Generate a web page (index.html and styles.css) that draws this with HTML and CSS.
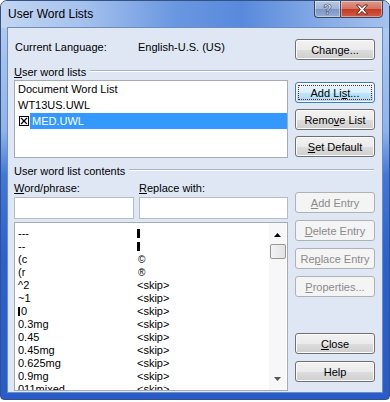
FILE: index.html
```html
<!DOCTYPE html>
<html lang="en">
<head>
  <meta charset="UTF-8">
  <title>User Word Lists</title>
  <link rel="stylesheet" href="styles.css">
</head>
<body>
  <div class="window">
    <div class="titlebar">
      <span class="title">User Word Lists</span>
      <div class="caption">
        <span class="cap-btn cap-help">?</span>
        <span class="cap-btn cap-close">
          <svg width="14" height="11" viewBox="0 0 14 11"><path d="M1.5 1h3l2.5 2.7L9.5 1h3L8.7 5.5l3.8 4.5h-3L7 7.3 4.5 10h-3l3.8-4.5z" fill="#fff" stroke="#5a2a22" stroke-width="1"/></svg>
        </span>
      </div>
    </div>

    <div class="client">
      <div class="row lang-row">
        <div class="left lang">
          <span class="lang-label">Current Language:</span>
          <span>English-U.S. (US)</span>
        </div>
        <div class="right">
          <button class="btn">Chan<u>g</u>e...</button>
        </div>
      </div>

      <div class="group-label"><span><u>U</u>ser word lists</span><i class="etch"></i></div>

      <div class="row lists-row">
        <div class="left listbox">
          <div class="item">Document Word List</div>
          <div class="item">WT13US.UWL</div>
          <div class="item item-sel">
            <svg class="check" width="10" height="10" viewBox="0 0 10 10"><rect x="0.5" y="0.5" width="9" height="9" fill="#fff" stroke="#000"/><path d="M2 2l6 6M8 2l-6 6" stroke="#000" stroke-width="1.2"/></svg>
            <span class="sel-text">MED.UWL</span>
          </div>
        </div>
        <div class="right btn-col top-btns">
          <button class="btn focus">Add Li<u>s</u>t...</button>
          <button class="btn">Remo<u>v</u>e List</button>
          <button class="btn"><u>S</u>et Default</button>
        </div>
      </div>

      <div class="group-label second"><span>User word list contents</span><i class="etch"></i></div>

      <div class="row entries-row">
        <div class="left">
          <div class="fields">
            <div class="field field-word">
              <span class="field-label"><u>W</u>ord/phrase:</span>
              <span class="edit"></span>
            </div>
            <div class="field field-repl">
              <span class="field-label"><u>R</u>eplace with:</span>
              <span class="edit"></span>
            </div>
          </div>
          <div class="biglist">
            <div class="rows">
              <div class="r"><span class="c1">---</span><span class="c2"><i class="bar"></i></span></div>
              <div class="r"><span class="c1">--</span><span class="c2"><i class="bar"></i></span></div>
              <div class="r"><span class="c1">(c</span><span class="c2 sym">©</span></div>
              <div class="r"><span class="c1">(r</span><span class="c2 sym">®</span></div>
              <div class="r"><span class="c1">^2</span><span class="c2">&lt;skip&gt;</span></div>
              <div class="r"><span class="c1">~1</span><span class="c2">&lt;skip&gt;</span></div>
              <div class="r"><span class="c1"><i class="bar thin"></i>0</span><span class="c2">&lt;skip&gt;</span></div>
              <div class="r"><span class="c1">0.3mg</span><span class="c2">&lt;skip&gt;</span></div>
              <div class="r"><span class="c1">0.45</span><span class="c2">&lt;skip&gt;</span></div>
              <div class="r"><span class="c1">0.45mg</span><span class="c2">&lt;skip&gt;</span></div>
              <div class="r"><span class="c1">0.625mg</span><span class="c2">&lt;skip&gt;</span></div>
              <div class="r"><span class="c1">0.9mg</span><span class="c2">&lt;skip&gt;</span></div>
              <div class="r"><span class="c1">011mixed</span><span class="c2">&lt;skip&gt;</span></div>
            </div>
            <div class="scrollbar">
              <span class="arrow">
                <svg width="7" height="4" viewBox="0 0 7 4"><path d="M0 4h7L3.5 0z" fill="#000"/></svg>
              </span>
              <span class="thumb"></span>
              <span class="arrow arrow-down">
                <svg width="7" height="4" viewBox="0 0 7 4"><path d="M0 0h7L3.5 4z" fill="#555"/></svg>
              </span>
            </div>
          </div>
        </div>
        <div class="right btn-col entry-btns">
          <button class="btn off"><u>A</u>dd Entry</button>
          <button class="btn off"><u>D</u>elete Entry</button>
          <button class="btn off">Re<u>p</u>lace Entry</button>
          <button class="btn off"><u>P</u>roperties...</button>
          <button class="btn close-btn"><u>C</u>lose</button>
          <button class="btn">Help</button>
        </div>
      </div>
    </div>
  </div>
</body>
</html>
```

FILE: styles.css
```css
* {
  box-sizing: border-box;
}
body {
  margin: 0;
  background: #fff;
  font-family: 'Liberation Sans', Arial, sans-serif;
  font-size: 11px;
  line-height: 13px;
  color: #000;
}

/* window frame */
.window {
  width: 390px;
  height: 400px;
  border: 1px solid #34527f;
  border-radius: 7px 7px 4px 4px;
  background: linear-gradient(to bottom, #b9cff0 0, #a4c1ed 60px, #8fb3ea 130px, #4177da 175px, #2a60d0 260px, #285cca 400px);
  padding: 0 7px 7px 7px;
  display: flex;
  flex-direction: column;
  overflow: hidden;
}
.titlebar {
  height: 27px;
  display: flex;
  align-items: flex-start;
  margin: 0 -7px;
  padding: 0 7px;
  background: linear-gradient(to right, #c3d6f2 0, #a3c0ed 22%, #6a97e1 45%, #5889dc 62%, #80a7e5 80%, #a6c2ed 100%);
}
.title {
  font-size: 12px;
  line-height: 15px;
  padding-top: 6px;
}
.caption {
  margin-left: auto;
  margin-top: -1px;
  margin-right: -1px;
  display: flex;
}
.cap-btn {
  height: 18px;
  border: 1px solid #3a4762;
  display: flex;
  align-items: center;
  justify-content: center;
  box-shadow: inset 0 0 0 1px rgba(255,255,255,0.4);
}
.cap-help {
  width: 26px;
  border-right: none;
  border-radius: 0 0 0 4px;
  background: linear-gradient(to bottom, #b9c9e4 0, #9fb3d6 50%, #7d97c4 51%, #93abd4 100%);
  color: #fff;
  font-weight: bold;
  font-size: 14px;
  -webkit-text-stroke: 0.6px #2f3f5c;
}
.cap-close {
  width: 43px;
  border-radius: 0 0 4px 0;
  background: linear-gradient(to bottom, #e09a8b 0, #d3725e 50%, #c13a24 51%, #d45a42 100%);
}

/* dialog body */
.client {
  flex: 1;
  background: #dfe7f5;
  box-shadow: 0 0 0 1px #6f8cbf;
  padding: 0 7px 0 6px;
  display: flex;
  flex-direction: column;
}
.row {
  display: flex;
  gap: 7px;
}
.left {
  width: 274px;
}
.right {
  width: 80px;
}
.lang-row {
  margin-top: 11px;
}
.lang {
  display: flex;
  align-items: center;
  padding-left: 1px;
  padding-bottom: 5px;
}
.lang-label {
  width: 123px;
}

.group-label {
  display: flex;
  align-items: flex-start;
  height: 13px;
  margin-top: 5px;
  margin-right: 1px;
}
.group-label span {
  margin-top: 1px;
}
.group-label.second {
  margin-top: 6px;
}
.etch {
  flex: 1;
  height: 2px;
  margin: 5px 0 0 4px;
  border-top: 1px solid #aab4c4;
  border-bottom: 1px solid #fff;
}

.lists-row {
  margin-top: 2px;
}
.listbox {
  height: 78px;
  background: #fff;
  border: 1px solid #a5acb5;
}
.item {
  height: 16px;
  line-height: 16px;
  padding-left: 3px;
}
.item-sel {
  display: flex;
  align-items: center;
}
.check {
  margin: 0 1px;
}
.sel-text {
  flex: 1;
  background: #3399ff;
  color: #fff;
  padding-left: 2px;
  height: 16px;
}

.btn-col {
  display: flex;
  flex-direction: column;
}
.top-btns {
  padding-top: 2px;
  gap: 6px;
}
.entry-btns {
  padding-top: 15px;
  gap: 7px;
}
.close-btn {
  margin-top: 29px;
}
.btn {
  position: relative;
  width: 80px;
  height: 21px;
  padding: 0;
  border: 1px solid #707070;
  border-radius: 3px;
  background: linear-gradient(to bottom, #f2f2f2 0, #ebebeb 50%, #dddddd 51%, #cfcfcf 100%);
  box-shadow: inset 0 0 0 1px #fbfbfb;
  font-family: inherit;
  font-size: 11px;
  color: #000;
  display: flex;
  align-items: center;
  justify-content: center;
}
.btn.focus {
  border-color: #3c7fb1;
  background: linear-gradient(to bottom, #eaf6fd 0, #d9f0fc 50%, #bee6fd 51%, #a7d9f5 100%);
}
.btn.focus::after {
  content: '';
  position: absolute;
  inset: 2px;
  border: 1px dotted #7a1a1a;
}
.btn.off {
  border-color: #adb2b5;
  background: #f4f4f4;
  color: #8a8a8a;
  box-shadow: none;
}

.fields {
  display: flex;
  gap: 5px;
}
.field {
  display: flex;
  flex-direction: column;
}
.field-word {
  width: 120px;
}
.field-repl {
  width: 149px;
}
.field-label {
  height: 13px;
  margin-top: 5px;
}
.edit {
  height: 22px;
  margin-top: 2px;
  background: #fff;
  border: 1px solid #b5bcc7;
}

.biglist {
  margin-top: 3px;
  height: 169px;
  background: #fff;
  border: 1px solid #a5acb5;
  display: flex;
  overflow: hidden;
}
.rows {
  flex: 1;
  padding: 4px 0 0 3px;
  overflow: hidden;
}
.r {
  display: flex;
  height: 13px;
  white-space: nowrap;
}
.c1 {
  width: 119px;
}
.bar {
  display: inline-block;
  width: 3px;
  height: 9px;
  background: #000;
  vertical-align: -1px;
}
.bar.thin {
  width: 2px;
  margin-right: 1px;
}
.sym {
  font-size: 10px;
  padding-left: 1px;
}
.scrollbar {
  width: 17px;
  margin-right: 1px;
  background: #f7f7f7;
  display: flex;
  flex-direction: column;
  align-items: center;
}
.arrow {
  height: 19px;
  display: flex;
  align-items: center;
  justify-content: center;
  padding-top: 4px;
}
.arrow-down {
  margin-top: auto;
  padding-top: 0;
  padding-bottom: 4px;
}
.thumb {
  width: 16px;
  height: 15px;
  margin-top: 2px;
  border: 1px solid #979797;
  border-radius: 2px;
  background: linear-gradient(to right, #f3f3f3, #e2e2e2);
}
```
